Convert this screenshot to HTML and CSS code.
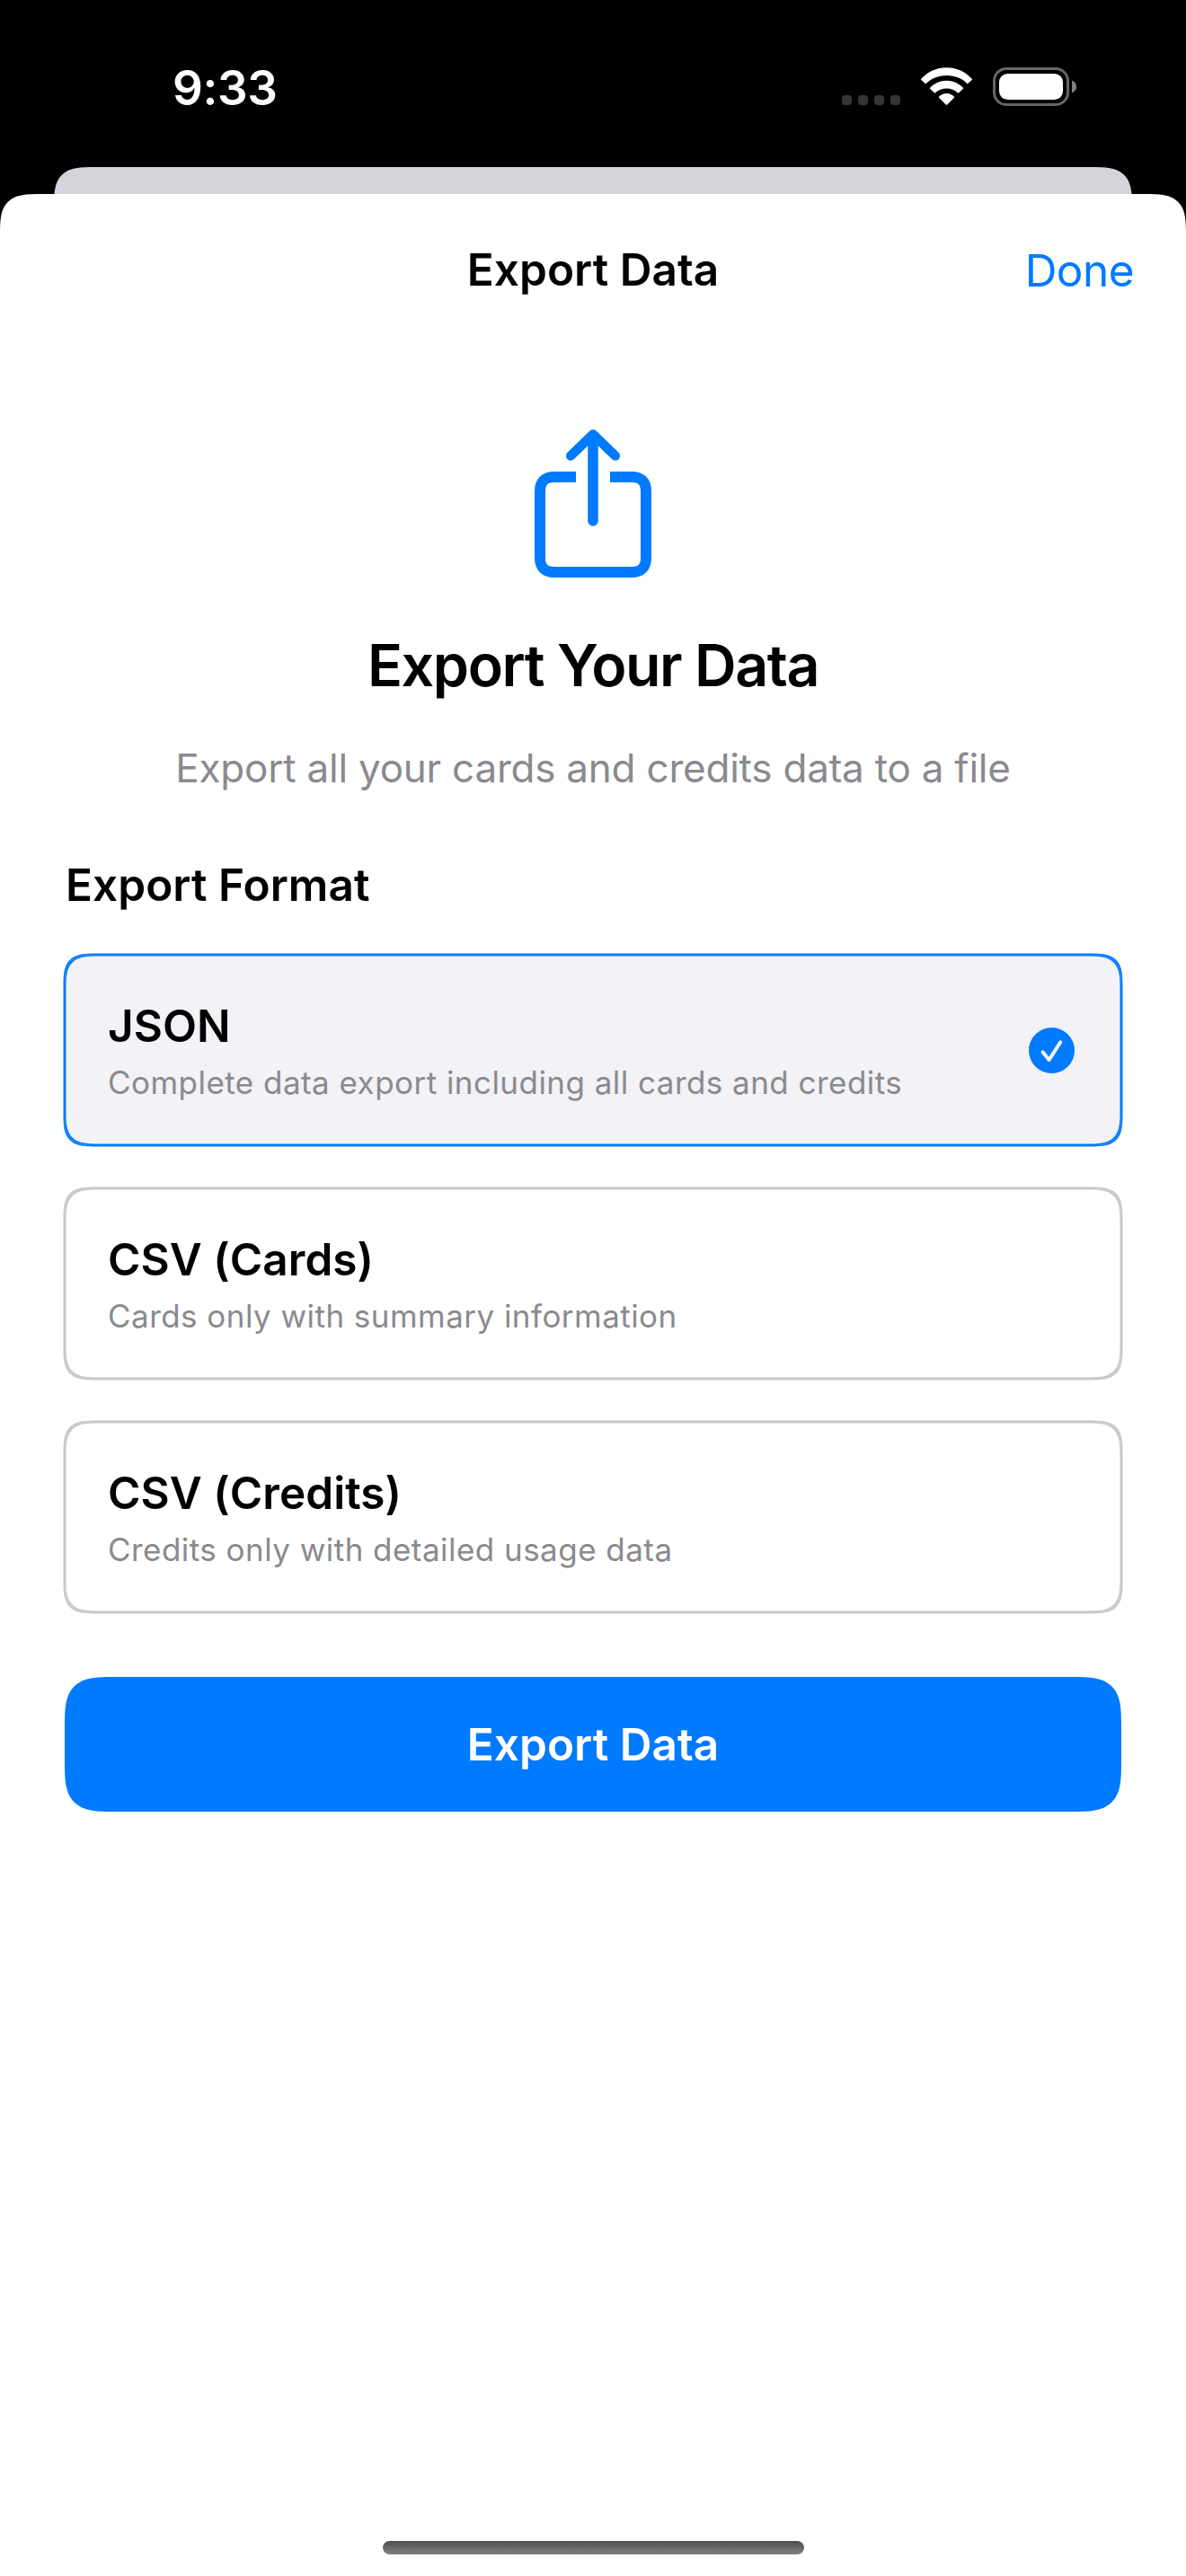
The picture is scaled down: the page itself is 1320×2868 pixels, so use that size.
FILE: index.html
```html
<!DOCTYPE html>
<html lang="en">
<head>
<meta charset="utf-8">
<meta name="viewport" content="width=device-width">
<title>Export Data</title>
<link rel="stylesheet" href="styles.css">
</head>
<body>
<div class="screen">
  <header class="status">
    <span class="time">9:33</span>
    <svg class="status-icons" width="264" height="48" viewBox="936 72 264 48" aria-hidden="true">
      <g fill="#353535">
        <rect x="937" y="106" width="11" height="11" rx="3.5"/>
        <rect x="955" y="106" width="11" height="11" rx="3.5"/>
        <rect x="973" y="106" width="11" height="11" rx="3.5"/>
        <rect x="991" y="106" width="11" height="11" rx="3.5"/>
      </g>
      <g fill="#fff">
        <path d="M1053.500 84.000C1063.200 84.000 1071.500 87.500 1076.200 93Q1076.700 93.400 1077.200 93L1081.800 89Q1082.300 88.300 1081.700 87.700C1074.500 80 1064.800 75.300 1053.500 75.300S1032.500 80 1025.300 87.700Q1024.700 88.300 1025.200 89L1029.800 93Q1030.300 93.400 1030.800 93C1036.500 87.500 1043.800 84.000 1053.500 84.000Z"/>
        <path d="M1053.500 98.500C1058.500 98.500 1062.500 100.300 1066 103.200Q1066.600 103.700 1067.200 103.200L1071.800 98.900Q1072.400 98.200 1071.700 97.500C1066.800 92.700 1060.600 89.800 1053.500 89.800S1040.200 92.700 1035.300 97.500Q1034.600 98.200 1035.200 98.900L1039.800 103.200Q1040.400 103.700 1041 103.200C1044.500 100.300 1048.500 98.500 1053.500 98.500Z"/>
        <path d="M1061.800 107.600Q1062.500 108.400 1061.800 109L1054.300 116.500Q1053.500 117.200 1052.700 116.500L1045.200 109Q1044.500 108.400 1045.200 107.600Q1048.500 104 1053.500 104T1061.800 107.600Z"/>
        <rect x="1112" y="82" width="71" height="29" rx="9.500"/>
      </g>
      <rect x="1106.500" y="76.500" width="82" height="40" rx="13.500" fill="none" stroke="#666" stroke-width="3"/>
      <path d="M1193 89.500Q1198 91.500 1198 96.500T1193 103.500Z" fill="#808080"/>
    </svg>
  </header>
  <div class="backdrop"></div>
  <main class="sheet">
    <nav class="navbar">
      <h1 class="headline nav-title">Export Data</h1>
      <a class="done">Done</a>
    </nav>
    <section class="hero">
      <svg class="share" width="132" height="168" viewBox="594 477 132 168" fill="none" stroke="#007aff" aria-hidden="true">
        <path stroke-width="12" d="M641 531H617Q601 531 601 547V621Q601 637 617 637H703Q719 637 719 621V547Q719 531 703 531H679"/>
        <path stroke-width="11.500" stroke-linecap="round" d="M660 486V580"/>
        <path stroke-width="10.500" stroke-linecap="round" stroke-linejoin="round" d="M635.200 507.500L660 483.400L684.800 507.500"/>
      </svg>
      <h2 class="title">Export Your Data</h2>
      <p class="subtitle">Export all your cards and credits data to a file</p>
    </section>
    <section class="formats">
      <h3 class="headline format-label">Export Format</h3>
      <div class="card selected">
        <div class="card-text">
          <div class="headline">JSON</div>
          <div class="caption">Complete data export including all cards and credits</div>
        </div>
        <svg class="check" width="51" height="51" viewBox="0 0 51 51" aria-hidden="true">
          <circle cx="25.500" cy="25.500" r="25.500" fill="#007aff"/>
          <path d="M15.500 27.300L22.600 36L35.200 16.300" fill="none" stroke="#f2f2f7" stroke-width="4" stroke-linecap="round" stroke-linejoin="round"/>
        </svg>
      </div>
      <div class="card">
        <div class="card-text">
          <div class="headline">CSV (Cards)</div>
          <div class="caption">Cards only with summary information</div>
        </div>
      </div>
      <div class="card">
        <div class="card-text">
          <div class="headline">CSV (Credits)</div>
          <div class="caption">Credits only with detailed usage data</div>
        </div>
      </div>
    </section>
    <button class="headline export">Export Data</button>
    <div class="home"></div>
  </main>
</div>
</body>
</html>
```
FILE: styles.css
```css
* { box-sizing: border-box; margin: 0; padding: 0; }
body { background: #000; font-family: Inter, "Liberation Sans", sans-serif; color: #000; }
.screen { width: 1320px; height: 2868px; display: flex; flex-direction: column; overflow: hidden; }
.status { height: 186px; padding: 72px 120px 0 192px; display: flex; justify-content: space-between; align-items: flex-start; }
.time { color: #fff; font-size: 53px; line-height: 52px; font-weight: 600; letter-spacing: -0.4px; }
.backdrop { flex: none; height: 30px; margin: 0 60px; background: #d5d4da; border-radius: 30px 30px 0 0; }
.sheet { flex: 1; background: #fff; border-radius: 34px 34px 0 0; padding: 0 72px; display: flex; flex-direction: column; }
.headline { font-size: 49.5px; line-height: 60px; font-weight: 600; letter-spacing: 0.04px; }
.navbar { height: 168px; margin: 0 -12px; display: grid; grid-template-columns: 1fr auto 1fr; align-items: center; }
.nav-title { grid-column: 2; }
.done { justify-self: end; margin-right: -2px; padding-top: 2px; color: #007aff; font-size: 49.5px; line-height: 60px; letter-spacing: -0.55px; }
.hero { display: flex; flex-direction: column; align-items: center; padding-top: 93px; }
.title { margin-top: 57px; font-size: 64.5px; line-height: 78px; font-weight: 600; letter-spacing: -1.44px; }
.subtitle { margin-top: 48px; font-size: 44px; line-height: 54px; letter-spacing: -0.226px; color: #8a8a8e; white-space: nowrap; }
.formats { display: flex; flex-direction: column; gap: 48px; margin-top: 73px; }
.format-label { padding-left: 1px; }
.card { height: 212px; border-radius: 26px; padding: 0 52px 0 48px; display: flex; align-items: center; justify-content: space-between; box-shadow: 0 0 0 1.5px #c7c7c7, inset 0 0 0 1.5px #c7c7c7; }
.card.selected { background: #f2f2f7; box-shadow: 0 0 0 1.5px #007aff, inset 0 0 0 1.5px #007aff; }
.card-text { align-self: flex-start; padding-top: 49px; display: flex; flex-direction: column; gap: 11px; }
.caption { font-size: 35px; line-height: 44px; letter-spacing: 0.46px; color: #8a8a8e; white-space: nowrap; }
.export { margin-top: 72px; height: 150px; border: 0; border-radius: 40px; background: #007aff; color: #fff; font-family: inherit; }
.home { width: 469px; height: 15px; margin: auto auto 24px; border-radius: 8px; background: linear-gradient(#4c4e4c, #828282); }

/* Continuous corners, where the browser can draw them */
@supports (corner-shape: superellipse(1.7)) {
  .backdrop, .sheet, .card, .export { corner-shape: superellipse(1.7); }
  .backdrop { border-radius: 46px 46px 0 0; height: 46px; margin-bottom: -16px; }
  .sheet { border-radius: 46px 46px 0 0; }
  .card { border-radius: 37px; }
  .export { border-radius: 55px; }
}
```
